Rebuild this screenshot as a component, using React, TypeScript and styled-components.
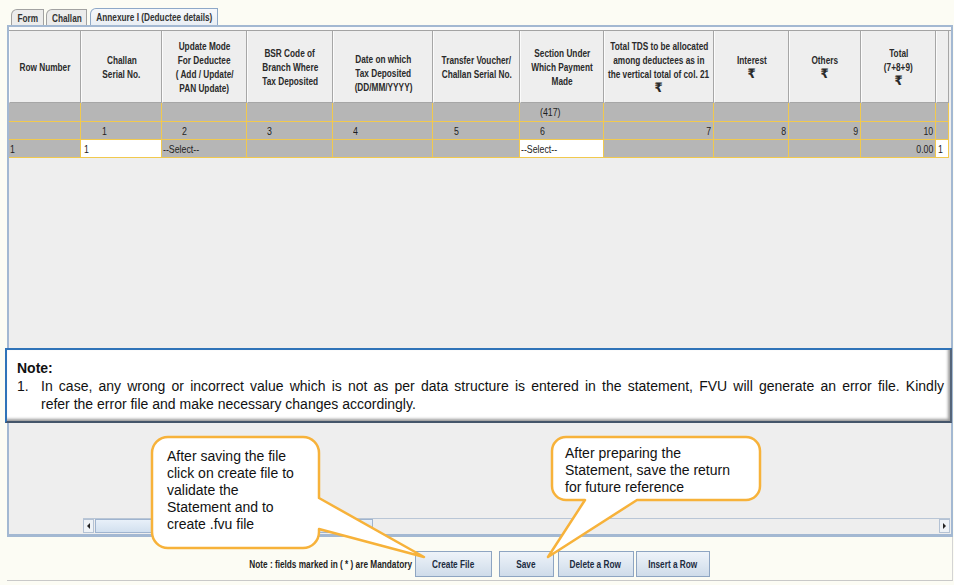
import React from 'react'
import styled, { createGlobalStyle } from 'styled-components'

const COLS = '72px 81px 85px 86px 100px 87px 84px 110px 75px 72px 75px 13px'
const ARIAL = '"Liberation Sans", Arial, sans-serif'
// the Java table uses a narrow face; squeeze Liberation Sans to match its width
const SQUEEZE = 0.75

const GlobalStyle = createGlobalStyle`
  html, body {
    margin: 0;
    padding: 0;
  }
  body {
    background: #fcfcf4;
    font-family: ${ARIAL};
    width: 954px;
    height: 585px;
    overflow: hidden;
  }
`

interface CellData {
  text?: string
  white?: boolean
  align?: 'left' | 'right'
  pad?: number
}

const headers: string[][] = [
  ['Row Number'],
  ['Challan', 'Serial No.'],
  ['Update Mode', 'For Deductee', '( Add / Update/', 'PAN Update)'],
  ['BSR Code of', 'Branch Where', 'Tax Deposited'],
  ['Date on which', 'Tax Deposited', '(DD/MM/YYYY)'],
  ['Transfer Voucher/', 'Challan Serial No.'],
  ['Section Under', 'Which Payment', 'Made'],
  ['Total TDS to be allocated', 'among deductees as in', 'the vertical total of col. 21', '₹'],
  ['Interest', '₹'],
  ['Others', '₹'],
  ['Total', '(7+8+9)', '₹'],
  [],
]

const sectionRow: CellData[] = [
  {}, {}, {}, {}, {}, {},
  { text: '(417)', pad: 20 },
  {}, {}, {}, {}, {},
]

const numberRow: CellData[] = [
  {},
  { text: '1', pad: 21 },
  { text: '2', pad: 20 },
  { text: '3', pad: 20 },
  { text: '4', pad: 20 },
  { text: '5', pad: 21 },
  { text: '6', pad: 20 },
  { text: '7', align: 'right' },
  { text: '8', align: 'right' },
  { text: '9', align: 'right' },
  { text: '10', align: 'right' },
  {},
]

const dataRow: CellData[] = [
  { text: '1', pad: 1 },
  { text: '1', white: true, pad: 3 },
  { text: '--Select--', pad: 1 },
  {}, {}, {},
  { text: '--Select--', white: true, pad: 1 },
  {}, {}, {},
  { text: '0.00', align: 'right' },
  { text: '1', white: true, pad: 2 },
]

const tabs = [
  { label: 'Form', width: 33 },
  { label: 'Challan', width: 41 },
  { label: 'Annexure I (Deductee details)', width: 128, active: true },
]

const buttons = [
  { label: 'Create File', width: 77, gap: 3 },
  { label: 'Save', width: 55, gap: 7 },
  { label: 'Delete a Row', width: 76, gap: 4 },
  { label: 'Insert a Row', width: 74, gap: 2 },
]

function App() {
  return (
    <Page>
      <GlobalStyle />
      <TabStrip>
        {tabs.map(t => (
          <Tab key={t.label} $active={t.active} $width={t.width}>
            <Narrow>{t.label}</Narrow>
          </Tab>
        ))}
      </TabStrip>

      <Panel>
        <Viewport>
          <HeaderRow>
            {headers.map((lines, i) => (
              <HeadCell key={i} $shift={i === 4 ? 12 : 0}>
                {lines.map((l, j) => (
                  <HeadLine key={j} $rupee={l === '₹'}>{l}</HeadLine>
                ))}
              </HeadCell>
            ))}
          </HeaderRow>
          {[sectionRow, numberRow, dataRow].map((row, r) => (
            <Row key={r} $height={r === 0 ? 19 : 18}>
              {row.map((c, i) => (
                <Cell key={i} $white={c.white} $align={c.align} $pad={c.pad}>
                  {c.text && <CellText $align={c.align}>{c.text}</CellText>}
                </Cell>
              ))}
            </Row>
          ))}
        </Viewport>
        <ScrollBar>
          <Arrow $dir="left" />
          <Thumb />
          <Track />
          <Arrow $dir="right" />
        </ScrollBar>
      </Panel>

      <Footer>
        <Mandatory>
          <Narrow $origin="right">Note : fields marked in ( * ) are Mandatory</Narrow>
        </Mandatory>
        {buttons.map(b => (
          <Button key={b.label} $width={b.width} $gap={b.gap}>
            <Narrow>{b.label}</Narrow>
          </Button>
        ))}
      </Footer>

      <NoteBox>
        <NoteTitle>Note:</NoteTitle>
        <NoteItem>
          <span>1.</span>
          <div>
            <JustifiedLine>
              In case, any wrong or incorrect value which is not as per data structure is entered in the
              statement, FVU will generate an error file. Kindly
            </JustifiedLine>
            <div>refer the error file and make necessary changes accordingly.</div>
          </div>
        </NoteItem>
      </NoteBox>

      <Callout $left={150} $top={435} $w={280} $h={126} $padLeft={17} $padTop={13}>
        <svg width="280" height="126" viewBox="0 0 280 126">
          <path
            d="M18 2 H153 A16 16 0 0 1 169 18 V63 L274 122 L169 94 V97 A16 16 0 0 1 153 113 H18 A16 16 0 0 1 2 97 V18 A16 16 0 0 1 18 2 Z"
            fill="#ffffff"
            stroke="#f7b23a"
            strokeWidth="2.5"
            strokeLinejoin="round"
          />
        </svg>
        <CalloutText>
          {['After saving the file', 'click on create file to', 'validate the', 'Statement and to', 'create .fvu file'].map(l => (
            <div key={l}>{l}</div>
          ))}
        </CalloutText>
      </Callout>

      <Callout $left={545} $top={435} $w={220} $h={126} $padLeft={20} $padTop={10}>
        <svg width="220" height="126" viewBox="0 0 220 126">
          <path
            d="M21 2 H201 A14 14 0 0 1 215 16 V51 A14 14 0 0 1 201 65 H92 L3 122 L40 65 H21 A14 14 0 0 1 7 51 V16 A14 14 0 0 1 21 2 Z"
            fill="#ffffff"
            stroke="#f7b23a"
            strokeWidth="2.5"
            strokeLinejoin="round"
          />
        </svg>
        <CalloutText>
          {['After preparing the', 'Statement, save the return', 'for future reference'].map(l => (
            <div key={l}>{l}</div>
          ))}
        </CalloutText>
      </Callout>
    </Page>
  )
}

export default App

const Page = styled.div`
  position: relative;
  width: 954px;
  height: 585px;
  padding: 8px 0 0 7px;
  box-sizing: border-box;
  display: flex;
  flex-direction: column;
`

const Narrow = styled.span<{ $origin?: 'left' | 'right' | 'center' }>`
  display: inline-block;
  white-space: nowrap;
  transform: scaleX(${SQUEEZE});
  transform-origin: ${p => p.$origin ?? 'center'};
`

const TabStrip = styled.div`
  display: flex;
  align-items: flex-end;
  gap: 2px;
  height: 17px;
  padding-left: 4px;
`

const Tab = styled.div<{ $active?: boolean; $width: number }>`
  width: ${p => p.$width}px;
  height: ${p => (p.$active ? 17 : 16)}px;
  margin-left: ${p => (p.$active ? 1 : 0)}px;
  box-sizing: border-box;
  display: flex;
  align-items: center;
  justify-content: center;
  font: bold 11px ${ARIAL};
  color: #333333;
  background: ${p => (p.$active ? 'linear-gradient(#f6f8fb, #e9eef4)' : '#ececec')};
  border: 1px solid ${p => (p.$active ? '#8ea8c8' : '#a2a2a2')};
  border-bottom: none;
  border-top-left-radius: 6px;
`

const Panel = styled.div`
  width: 946px;
  height: 512px;
  box-sizing: border-box;
  border: 2px solid #a3b8d2;
  border-bottom-width: 3px;
  display: flex;
  flex-direction: column;
  background: #eeeeee;
`

const Viewport = styled.div`
  flex: 1;
  padding-top: 3px;
  background: linear-gradient(#fafafa 0 3px, #eeeeee 3px);
`

const HeaderRow = styled.div`
  display: grid;
  grid-template-columns: ${COLS};
  height: 73px;
  border-top: 1px solid #a3a3a3;
  box-sizing: border-box;
`

const HeadCell = styled.div<{ $shift: number }>`
  display: flex;
  flex-direction: column;
  align-items: center;
  justify-content: center;
  padding-top: ${p => p.$shift}px;
  background: #eeeeee;
  border-left: 1px solid #fbfbfb;
  border-right: 1px solid #a6a6a6;
  border-bottom: 1px solid #a6a6a6;
  color: #2a2a2a;
  text-align: center;
  min-width: 0;
`

const HeadLine = styled.div<{ $rupee?: boolean }>`
  white-space: nowrap;
  transform: scaleX(${p => (p.$rupee ? 0.9 : SQUEEZE)});
  font-weight: bold;
  font-size: ${p => (p.$rupee ? 13 : 11)}px;
  line-height: ${p => (p.$rupee ? 13 : 14)}px;
  font-family: ${p => (p.$rupee ? '"DejaVu Sans", sans-serif' : ARIAL)};
`

const Row = styled.div<{ $height: number }>`
  display: grid;
  grid-template-columns: ${COLS};
  height: ${p => p.$height}px;
`

const Cell = styled.div<{ $white?: boolean; $align?: 'left' | 'right'; $pad?: number }>`
  display: flex;
  align-items: center;
  justify-content: ${p => (p.$align === 'right' ? 'flex-end' : 'flex-start')};
  padding: 0 ${p => (p.$align === 'right' ? 2 : 0)}px 0 ${p => p.$pad ?? 0}px;
  background: ${p => (p.$white ? '#ffffff' : '#b6b6b6')};
  border-right: 1px solid #f1c94e;
  border-bottom: 1px solid #f1c94e;
  font: 11px ${ARIAL};
  color: #1e1e1e;
  min-width: 0;
`

const CellText = styled.span<{ $align?: 'left' | 'right' }>`
  display: inline-block;
  white-space: nowrap;
  transform: scaleX(0.8);
  transform-origin: ${p => (p.$align === 'right' ? 'right' : 'left')};
`

const ScrollBar = styled.div`
  display: flex;
  height: 14px;
  margin: 0 1px 1px 74px;
  border-top: 1px solid #b9c6d6;
  background: #eeeeee;
`

const Arrow = styled.div<{ $dir: 'left' | 'right' }>`
  width: 11px;
  box-sizing: border-box;
  border: 1px solid #b4c2d4;
  background: #eef2f6;
  position: relative;
  &::after {
    content: '';
    position: absolute;
    top: 3px;
    left: 3px;
    border-top: 3px solid transparent;
    border-bottom: 3px solid transparent;
    ${p => (p.$dir === 'left' ? 'border-right: 3px solid #222;' : 'border-left: 3px solid #222;')}
  }
`

const Thumb = styled.div`
  width: 278px;
  margin-left: 1px;
  box-sizing: border-box;
  border: 1px solid #9fb4cf;
  background: linear-gradient(#e8f0f9, #d2e0ef);
`

const Track = styled.div`
  flex: 1;
`

const Footer = styled.div`
  flex: 1;
  width: 946px;
  box-sizing: border-box;
  display: flex;
  align-items: flex-end;
  justify-content: center;
  padding-bottom: 3px;
  margin-bottom: 4px;
  border-bottom: 1px solid #c9c9c9;
  border-right: 1px solid #d4d4d4;
`

const Mandatory = styled.div`
  width: 162px;
  height: 26px;
  display: flex;
  align-items: center;
  justify-content: flex-end;
  font: bold 11px ${ARIAL};
  color: #1e1e1e;
`

const Button = styled.div<{ $width: number; $gap: number }>`
  width: ${p => p.$width}px;
  height: 26px;
  margin-left: ${p => p.$gap}px;
  box-sizing: border-box;
  display: flex;
  align-items: center;
  justify-content: center;
  border: 1px solid #8ea5c2;
  background: linear-gradient(#eef3f9, #cfdcea);
  font: bold 11px ${ARIAL};
  color: #1c2b3e;
`

const NoteBox = styled.div`
  position: absolute;
  left: 5px;
  top: 348px;
  width: 947px;
  height: 75px;
  box-sizing: border-box;
  padding: 9px 6px 0 10px;
  background: #ffffff;
  border: 2px solid #2f73b8;
  border-bottom-color: #44556a;
  border-right-color: #55657a;
  box-shadow: inset -2px -2px 3px #9a9a9a;
  font: 14px/18px ${ARIAL};
  color: #111111;
`

const NoteTitle = styled.div`
  font-weight: bold;
`

const NoteItem = styled.div`
  display: grid;
  grid-template-columns: 24px 1fr;
`

const JustifiedLine = styled.div`
  text-align: justify;
  text-align-last: justify;
`

const Callout = styled.div<{ $left: number; $top: number; $w: number; $h: number; $padLeft: number; $padTop: number }>`
  position: absolute;
  left: ${p => p.$left}px;
  top: ${p => p.$top}px;
  width: ${p => p.$w}px;
  height: ${p => p.$h}px;
  padding: ${p => p.$padTop}px 0 0 ${p => p.$padLeft}px;
  box-sizing: border-box;
  svg {
    position: absolute;
    left: 0;
    top: 0;
  }
`

const CalloutText = styled.div`
  position: relative;
  font: 14px/17px ${ARIAL};
  color: #111111;
`
